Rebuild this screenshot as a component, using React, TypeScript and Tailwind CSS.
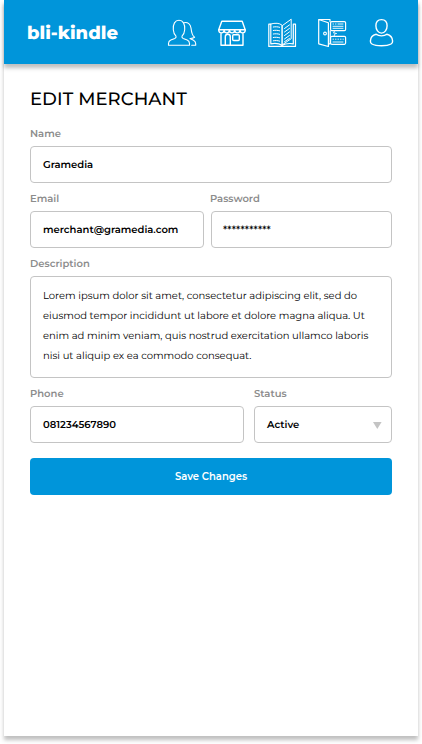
import type { ReactNode } from "react";

function Icon({ box, children }: { box: string; children: ReactNode }) {
  return (
    <svg width="28" height="32" viewBox={box} fill="none" stroke="currentColor" strokeLinecap="round" strokeLinejoin="round" className="block overflow-visible">
      {children}
    </svg>
  );
}

function MerchantNav() {
  return (
    <nav className="flex gap-[22px] text-white">
      <Icon box="168 16 28 32">
        <path strokeWidth="1.1" d="M168.500 45.300v-1.700c0-1.900.8-3.100 2.300-3.700l4-1.500c1.200-.5 1.500-1.300 1.200-2.300-1.700-1.500-2.500-3.600-2.700-6.300-.4-5.800 1.600-9.500 5.700-9.500s6.100 3.700 5.700 9.500c-.2 2.700-1 4.800-2.700 6.300-.3 1 0 1.800 1.200 2.300l4 1.500c1.500.6 2.300 1.800 2.300 3.700v1.700z" />
        <path strokeWidth="1.1" d="M184 22.700c4-.7 6.500 1.300 7 5.300.4 3.700.9 7.600 3.600 9.300-1.500 1-3.200 1.300-4.600 1.200l3.500 1.800c1.500.8 2.200 1.700 2.200 3.400v1.600h-4" />
      </Icon>
      <Icon box="218 16 28 32">
        <path strokeWidth="1.400" d="M221.800 21.300h20.400l3 8.500h-26.500z" />
        <path strokeWidth="1.400" d="M218.700 30c.2 3.800 5.200 3.800 5.400 0 .2 3.800 5.100 3.800 5.300 0 .2 3.800 5.100 3.800 5.300 0 .2 3.800 5.100 3.800 5.300 0 .2 3.800 5.100 3.800 5.300 0M221 33.500v11.700h22v-11.700M225.300 45v-8.300c0-3.200 5-3.200 5 0V45" />
        <rect x="232.700" y="34.800" width="6.600" height="5.700" rx="1" strokeWidth="1.400" />
      </Icon>
      <Icon box="268 16 28 32">
        <path strokeWidth="1.200" d="M270.800 24.200h-2v22.200h26.700V24.200h-2.200M270.800 24v19.800c4.300-.7 8.200-.5 11.200 1.500 2.800-1.500 6.500-2.200 11.300-1.500V24" />
        <path strokeWidth="1" d="M270.800 24c4.500-1.300 8.700-1 11.200 1.200v19.800M282.500 25.500l8.700-6.300v19.500l-8.700 6z" />
        <path strokeWidth="1" d="M273.300 27c2.200-.4 4.300-.3 6.300.3M273.300 30.500c2.200-.4 4.300-.3 6.300.3M273.300 34c2.200-.4 4.300-.3 6.300.3M273.300 37.500c2.200-.4 4.300-.3 6.300.3M273.300 40.800c2.200-.4 4.300-.3 6.300.3M284.500 28.500l5-3.600M284.500 32l5-3.600M284.500 35.500l5-3.600M284.500 39l5-3.600M284.500 41.700l5-3.300" />
      </Icon>
      <Icon box="318 16 28 32">
        <path strokeWidth="1.200" d="M318.700 19.500l9.700 3.300v23.700l-9.700-2.700zM319 19.500h11v2M328.500 43.800h1.700v-13" />
        <circle cx="325" cy="33.500" r="1.400" strokeWidth="1.100" />
        <rect x="330.600" y="21.600" width="15" height="9" rx="1.200" strokeWidth="1.200" />
        <rect x="330.600" y="36.300" width="15" height="8" rx="1.200" strokeWidth="1.200" />
        <path strokeWidth=".9" d="M333 24h.5M335.500 24h.5M338 24h5M333 26.300h10M333 28.300h10M333 39.200h.5M335.500 39.200h.5M338 39.200h.5M340.500 39.200h.5M343 39.200h.3M333 42h10M334.500 31l-1 2h2l-1.500 3M336 33.500h.5" />
      </Icon>
      <Icon box="368 16 28 32">
        <path strokeWidth="1.400" d="M381.500 19.600c3.700 0 5.600 2.500 5.600 6.200 0 4-2.300 7.300-5.600 7.300s-5.600-3.300-5.600-7.300c0-3.700 1.900-6.200 5.600-6.200z" />
        <path strokeWidth="1.400" d="M376.200 34.300c-3.700.9-5.600 3-5.800 6.700-.1 1.500.2 2.300 1.500 3 2.600 1.400 6.200 1.800 9.600 1.800s7-.4 9.600-1.800c1.300-.7 1.600-1.500 1.500-3-.2-3.700-2.100-5.800-5.800-6.700-1.200 1-3 1.600-5.300 1.600s-4.100-.6-5.300-1.600z" />
      </Icon>
    </nav>
  );
}

function Field({ label, className = "", children }: { label: string; className?: string; children: ReactNode }) {
  return (
    <div className={className}>
      <div className="h-7 pt-2 text-[10px] leading-4 font-semibold text-[#8c8c8c]">{label}</div>
      {children}
    </div>
  );
}

const inputBox = "flex h-[37px] items-center rounded-[4px] border border-[#c4c4c4] bg-white px-3 text-[10px] font-semibold whitespace-nowrap text-black";

export default function App() {
  return (
    <div className="h-[744px] overflow-hidden bg-white px-1 font-['Montserrat','Inter',sans-serif] [text-rendering:geometricPrecision]">
      <div className="h-[736px] w-[414px] bg-white shadow-[0_4px_4px_rgba(0,0,0,0.25)]">
        <header className="flex h-16 items-center justify-between bg-[#0095da] pr-[22px] pl-[23px] shadow-[0_4px_4px_rgba(0,0,0,0.25)]">
          <div className="pt-[2px] text-[18px] leading-6 font-extrabold text-white">bli-kindle</div>
          <MerchantNav />
        </header>
        <main className="px-[26px] pt-[23px]">
          <h1 className="h-[31px] text-[18px] leading-6 font-medium tracking-[0.06px] whitespace-nowrap text-black">EDIT MERCHANT</h1>
          <Field label="Name">
            <div className={inputBox}>Gramedia</div>
          </Field>
          <div className="flex gap-[6px]">
            <Field label="Email" className="w-[174px]">
              <div className={inputBox}>merchant@gramedia.com</div>
            </Field>
            <Field label="Password" className="w-[182px]">
              <div className={`${inputBox} ml-px pl-[11px]`}>***********</div>
            </Field>
          </div>
          <Field label="Description">
            <div className="h-[102px] rounded-[4px] border border-[#c4c4c4] px-3 py-[9px] text-[10px] leading-5 whitespace-nowrap text-black">
              <p>Lorem ipsum dolor sit amet, consectetur adipiscing elit, sed do</p>
              <p>eiusmod tempor incididunt ut labore et dolore magna aliqua. Ut</p>
              <p>enim ad minim veniam, quis nostrud exercitation ullamco laboris</p>
              <p>nisi ut aliquip ex ea commodo consequat.</p>
            </div>
          </Field>
          <div className="flex gap-[10px]">
            <Field label="Phone" className="w-[214px]">
              <div className={inputBox}>081234567890</div>
            </Field>
            <Field label="Status" className="w-[138px]">
              <div className={`${inputBox} justify-between pr-[10px]`}>
                Active
                <svg width="9" height="7" viewBox="0 0 9 7" className="mt-px -mr-px text-[#c4c4c4]">
                  <path d="M0 0h8.600L4.300 7z" fill="currentColor" />
                </svg>
              </div>
            </Field>
          </div>
          <button className="mt-[15px] flex h-[37px] w-full items-center justify-center rounded-[4px] bg-[#0095da] text-[10px] font-semibold text-white">
            Save Changes
          </button>
        </main>
      </div>
    </div>
  );
}
